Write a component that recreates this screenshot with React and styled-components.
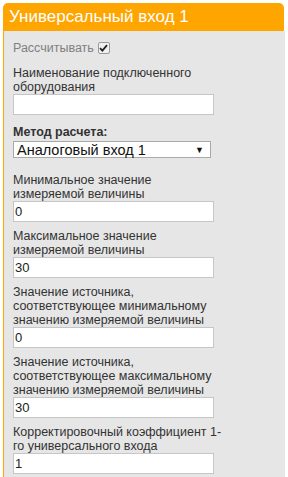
import React from "react";
import styled, { createGlobalStyle } from "styled-components";

const Global = createGlobalStyle`
  html, body { margin: 0; padding: 0; background: #ffffff; }
  body { font-family: "Liberation Sans", Arial, sans-serif; }
  * { box-sizing: border-box; }
`;

const Panel = styled.div`
  margin: 3px 0 0 3px;
  width: 282px;
  display: flex;
  flex-direction: column;
`;

const Header = styled.div`
  height: 28px;
  width: 281px;
  background: #ffa500;
  border-radius: 5px 5px 0 0;
  color: #ffffff;
  font-size: 17px;
  line-height: 28px;
  padding-left: 6px;
  white-space: nowrap;
`;

const Body = styled.div`
  background: #e6e6e6;
  border-left: 1px solid #ffa500;
  padding: 10px 0 3px 9px;
  display: flex;
  flex-direction: column;
  min-height: 446px;
`;

const CheckRow = styled.div`
  display: flex;
  align-items: center;
  gap: 4px;
  height: 14px;
  color: #808080;
  font-size: 12.5px;
  line-height: 14px;
`;

const Check = styled.span`
  width: 12px;
  height: 12px;
  border: 1px solid #9a9a9a;
  border-radius: 2px;
  background: #f0f0f0;
  display: inline-flex;
  align-items: center;
  justify-content: center;
`;

const Field = styled.div`
  display: flex;
  flex-direction: column;
  margin-top: ${(p) => p.$gap ?? 7}px;
`;

const Label = styled.div`
  color: #333333;
  font-size: 12.5px;
  line-height: 14px;
  font-weight: ${(p) => (p.$bold ? 700 : 400)};
  width: ${(p) => p.$w ?? 207}px;
  margin-bottom: ${(p) => p.$after ?? 0}px;
`;

const Input = styled.input`
  display: block;
  width: 201px;
  height: 21px;
  margin: 0;
  border: 1px solid #c6c6c6;
  background: #ffffff;
  padding: 0 1px;
  font-family: "Liberation Sans", Arial, sans-serif;
  font-size: 13px;
  color: #222;
  outline: none;
`;

const SelectBox = styled.div`
  width: 198px;
  height: 17px;
  border: 1px solid #a9a9a9;
  background: #ffffff;
  display: flex;
  align-items: center;
  justify-content: space-between;
  padding: 0 6px 0 3px;
  font-size: 14.5px;
  color: #111;
  white-space: nowrap;
`;

const Arrow = styled.span`
  font-size: 9px;
  color: #111;
`;

const fields = [
  { label: "Минимальное значение измеряемой величины", value: "0", gap: 15 },
  { label: "Максимальное значение измеряемой величины", value: "30" },
  {
    label: "Значение источника, соответствующее минимальному значению измеряемой величины",
    value: "0",
  },
  {
    label: "Значение источника, соответствующее максимальному значению измеряемой величины",
    value: "30",
  },
  { label: "Корректировочный коэффициент 1-\u200Bго универсального входа", value: "1", w: 218 },
];

export default function App() {
  return (
    <>
      <Global />
      <Panel>
        <Header>Универсальный вход 1</Header>
        <Body>
          <CheckRow>
            Рассчитывать
            <Check>
              <svg width="9" height="8" viewBox="0 0 9 8">
                <path d="M1 4.2 L3.4 6.6 L8 1.2" stroke="#222" strokeWidth="1.8" fill="none" />
              </svg>
            </Check>
          </CheckRow>
          <Field $gap={11}>
            <Label>Наименование подключенного оборудования</Label>
            <Input defaultValue="" />
          </Field>
          <Field $gap={10}>
            <Label $bold $after={2}>Метод расчета:</Label>
            <SelectBox>
              <span>Аналоговый вход 1</span>
              <Arrow>▼</Arrow>
            </SelectBox>
          </Field>
          {fields.map((f, i) => (
            <Field key={i} $gap={f.gap}>
              <Label $w={f.w}>{f.label}</Label>
              <Input defaultValue={f.value} />
            </Field>
          ))}
        </Body>
      </Panel>
    </>
  );
}
